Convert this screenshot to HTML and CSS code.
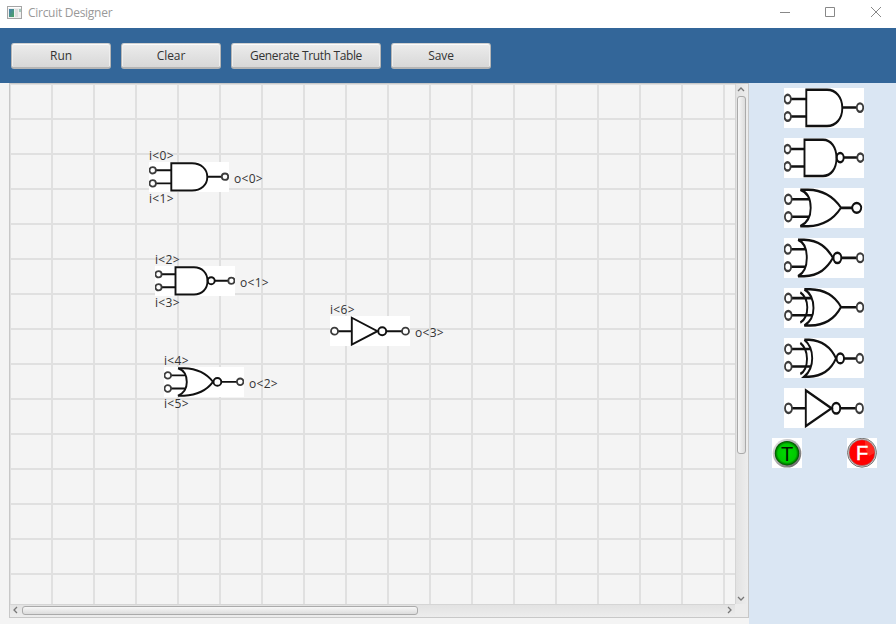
FILE: index.html
```html
<!DOCTYPE html>
<html lang="en">
<head>
<meta charset="utf-8">
<title>Circuit Designer</title>
<link rel="stylesheet" href="styles.css">
</head>
<body>
<svg class="defs" width="0" height="0" aria-hidden="true">
  <symbol id="and" viewBox="0 0 80 30" preserveAspectRatio="none">
    <path d="M22.3 1.3H43C52 1.3 58.300 7 58.300 15S52 28.500 43 28.500H22.300ZM7 8.300H22M7 21.400H22M58.300 14.700H73"/>
    <g class="pin"><circle cx="3.700" cy="8.300" r="3.200"/><circle cx="3.700" cy="21.400" r="3.200"/><circle cx="76" cy="14.700" r="3.200"/></g>
  </symbol>
  <symbol id="nand" viewBox="0 0 80 30" preserveAspectRatio="none">
    <path d="M20.500 1.300H39C47 1.300 52.500 7 52.500 15S47 28.500 39 28.500H20.500ZM6.500 8.300H20M6.500 21.300H20M60 14.700H73"/>
    <circle cx="56.200" cy="14.700" r="3.500"/>
    <g class="pin"><circle cx="3.500" cy="8.300" r="3.100"/><circle cx="3.500" cy="21.300" r="3.100"/><circle cx="76.400" cy="14.700" r="3.100"/></g>
  </symbol>
  <symbol id="or" viewBox="0 0 80 30" preserveAspectRatio="none">
    <path d="M16.300 1.300H24C40 1.500 50 7 57 14.800C50 23 40 28.300 24 28.700H16.300Q26.700 25 26.700 15Q26.700 4 16.300 1.300M8 8.500H25M8 21.600H25M57 14.900H68"/>
    <ellipse cx="72.700" cy="14.900" rx="4.500" ry="3.700"/>
    <g class="pin"><circle cx="4.300" cy="8.500" r="3.400"/><circle cx="4.300" cy="21.600" r="3.400"/></g>
  </symbol>
  <symbol id="nor" viewBox="0 0 80 30" preserveAspectRatio="none">
    <path d="M14 1.300H20C35 1.800 43 7 49 14.900C43 23 35 28 20 28.700H14Q22.800 25 22.800 15Q22.800 4 14 1.300M7 8.400H21.500M7 21.500H21.500M58 14.900H73"/>
    <circle cx="53.400" cy="14.900" r="3.900"/>
    <g class="pin"><circle cx="3.800" cy="8.400" r="3.300"/><circle cx="3.800" cy="21.500" r="3.300"/><circle cx="76.200" cy="14.800" r="3.300"/></g>
  </symbol>
  <symbol id="xor" viewBox="0 0 80 30" preserveAspectRatio="none">
    <path d="M20.300 1H26C42 1.300 51 6 57 14.300C51 23 42 28 26 28.200H20.300Q29.500 24 29.500 15Q29.500 5 20.300 1M16.300 3.200Q23.300 7 23.300 14.500Q23.300 23 16.300 26M8 7.600H28M8 20.500H28M57 14.400H72"/>
    <g class="pin"><circle cx="4.300" cy="7.600" r="3.300"/><circle cx="4.300" cy="20.500" r="3.300"/><circle cx="76" cy="14.400" r="3.300"/></g>
  </symbol>
  <symbol id="xnor" viewBox="0 0 80 30" preserveAspectRatio="none">
    <path d="M20.300 1.300H25C39 2 47 7 52 15.300C47 24 39 28.600 25 29H20.300Q28.200 24 28.200 15.200Q28.200 6 20.300 1.300M16.300 3.700Q23 8 23 15.500Q23 24 16.300 27M8 8.300H27M8 21.300H27M60 15.400H72"/>
    <circle cx="56.300" cy="15.300" r="3.700"/>
    <g class="pin"><circle cx="4.300" cy="8.300" r="3.300"/><circle cx="4.300" cy="21.300" r="3.300"/><circle cx="75.800" cy="15.300" r="3.300"/></g>
  </symbol>
  <symbol id="not" viewBox="0 0 80 30" preserveAspectRatio="none">
    <path d="M21.800 1.700V28.600L47.500 15.200ZM8 15.200H21.500M56 15.200H72"/>
    <circle cx="52.200" cy="15.200" r="4"/>
    <g class="pin"><circle cx="4.500" cy="15.200" r="3.500"/><circle cx="75.500" cy="15.200" r="3.500"/></g>
  </symbol>
</svg>

<header class="titlebar">
  <svg class="app-icon" width="15" height="13" viewBox="0 0 15 13">
    <defs><linearGradient id="app" x2="1" y2="1"><stop stop-color="#477fb3"/><stop offset="1" stop-color="#4aa35f"/></linearGradient></defs>
    <rect x=".5" y=".5" width="14" height="12" fill="#f0f0f0" stroke="#a5a5a5"/>
    <path fill="url(#app)" d="M2 3h5v8H2z"/><path fill="#ddd" d="M8 3h3v8H8z"/><path fill="#a4c8bd" d="M12 3h2v3h-2z"/><path fill="#fff" d="M1 1h13v1H1z"/>
  </svg>
  <span class="title">Circuit Designer</span>
  <svg class="controls" width="116" height="24" viewBox="0 0 116 24" fill="none" stroke="#888">
    <path d="M0 12.500h10M45.500 7.500h9v9h-9zM91 7l10 10M101 7l-10 10"/>
  </svg>
</header>

<nav class="toolbar">
  <button>Run</button>
  <button>Clear</button>
  <button class="wide">Generate Truth Table</button>
  <button>Save</button>
</nav>

<main class="workspace">
  <section class="scroll-pane">
    <div class="canvas">
      <div class="node n-and"><span class="in">i&lt;0&gt;</span><svg class="gate"><use href="#and"/></svg><span class="in b">i&lt;1&gt;</span><span class="out">o&lt;0&gt;</span></div>
      <div class="node n-nand"><span class="in">i&lt;2&gt;</span><svg class="gate"><use href="#nand"/></svg><span class="in b">i&lt;3&gt;</span><span class="out">o&lt;1&gt;</span></div>
      <div class="node n-nor"><span class="in">i&lt;4&gt;</span><svg class="gate"><use href="#nor"/></svg><span class="in b">i&lt;5&gt;</span><span class="out">o&lt;2&gt;</span></div>
      <div class="node n-not"><span class="in">i&lt;6&gt;</span><svg class="gate"><use href="#not"/></svg><span class="out">o&lt;3&gt;</span></div>
    </div>
    <div class="vbar">
      <svg class="arrow" width="8" height="5"><path d="M1 4L4 1l3 3"/></svg>
      <div class="track"><div class="thumb"></div></div>
      <svg class="arrow" width="8" height="5"><path d="M1 1l3 3 3-3"/></svg>
    </div>
    <div class="hbar">
      <svg class="arrow" width="5" height="8"><path d="M4 1L1 4l3 3"/></svg>
      <div class="track"><div class="thumb"></div></div>
      <svg class="arrow" width="5" height="8"><path d="M1 1l3 3-3 3"/></svg>
    </div>
    <div class="corner"></div>
  </section>

  <aside class="palette">
    <svg class="gate"><use href="#and"/></svg>
    <svg class="gate"><use href="#nand"/></svg>
    <svg class="gate"><use href="#or"/></svg>
    <svg class="gate"><use href="#nor"/></svg>
    <svg class="gate"><use href="#xor"/></svg>
    <svg class="gate"><use href="#xnor"/></svg>
    <svg class="gate"><use href="#not"/></svg>
    <div class="constants">
      <svg width="30" height="30" viewBox="0 0 30 30">
        <defs>
          <linearGradient id="rim" x2="1" y2="1"><stop stop-color="#eee"/><stop offset=".5" stop-color="#aaa"/><stop offset="1" stop-color="#555"/></linearGradient>
          <radialGradient id="green"><stop stop-color="#00dc00"/><stop offset=".75" stop-color="#00c800"/><stop offset="1" stop-color="#004a00"/></radialGradient>
        </defs>
        <path fill="#fff" d="M0 0h30v30H0z"/><circle cx="15" cy="15.300" r="14.300" fill="url(#rim)"/><circle cx="15" cy="15.200" r="12.200" fill="url(#green)"/>
        <text class="t" x="15" y="22.500">T</text>
      </svg>
      <svg width="30" height="30" viewBox="0 0 30 30">
        <path fill="#fff" d="M0 0h30v30H0z"/><circle cx="15" cy="14.700" r="14.500" fill="#d0d0d0" stroke="#777"/><circle cx="15" cy="14.700" r="13" fill="#f00" stroke="#888" stroke-width=".6"/>
        <path fill="#ff4a3c" d="M18 2.500C24 4 27.500 9 27.500 15L22 18L18 10Z" opacity=".55"/>
        <text class="f" x="15" y="21.500">F</text>
      </svg>
    </div>
  </aside>
</main>
</body>
</html>
```

FILE: styles.css
```css
* { box-sizing: border-box; }
body {
  margin: 0;
  width: 896px;
  height: 624px;
  overflow: hidden;
  display: flex;
  flex-direction: column;
  background: #f4f4f4;
  font: 12px/16px "Open Sans", "Noto Sans", sans-serif;
  color: #333;
}
.defs { position: absolute; }

.titlebar {
  height: 28px;
  display: flex;
  align-items: flex-start;
  padding: 5px 0 0 7px;
  background: #fff;
  color: #999;
}
.app-icon { margin: 1px 6px 0 0; }
.title { letter-spacing: -.28px; }
.controls { margin: -5px 0 0 auto; }

.toolbar {
  height: 55px;
  display: flex;
  align-items: center;
  gap: 10px;
  padding: 1px 11px 0;
  background: #336699;
}
.toolbar button {
  width: 100px;
  height: 26px;
  padding: 0;
  border: 1px solid #b5b5b5;
  border-top-color: #d0d0d0;
  border-bottom-width: 2px;
  border-radius: 3px;
  background: linear-gradient(#ececec, #d8d8d8);
  box-shadow: inset 0 1px #fbfbfb, inset 1px 0 #eee, inset -1px 0 #eee;
  font: inherit;
  letter-spacing: -.1px;
  color: #333;
}
.toolbar .wide { width: 150px; letter-spacing: -.37px; }

.workspace {
  height: 541px;
  display: flex;
  padding-left: 9px;
}
.scroll-pane {
  width: 740px;
  height: 535px;
  display: grid;
  grid-template: 520px 13px / 725px 13px;
  border: 1px solid #c8c8c8;
}
.canvas {
  position: relative;
  background:
    linear-gradient(90deg, #e0e0e0 2px, transparent 2px) -1px -1px / 42px 35px,
    linear-gradient(#e0e0e0 2px, transparent 2px) -1px -1px / 42px 35px,
    #f4f4f4;
}
.gate {
  width: 80px;
  height: 30px;
  display: block;
  background: #fff;
  fill: none;
  stroke: #111;
  stroke-width: 1.9;
}
.pin { stroke: #3c3c3c; stroke-width: 1.8; }

.node { position: absolute; width: 80px; }
.n-and { left: 139px; top: 78px; }
.n-nand { left: 145px; top: 182px; }
.n-nor { left: 154px; top: 283px; }
.n-not { left: 320px; top: 232px; }
.node span { position: absolute; letter-spacing: .3px; }
.node .in { left: 0; top: -14px; }
.node .in.b { top: 29px; }
.node .out { left: 85px; top: 9px; }

.vbar, .hbar { display: flex; align-items: center; }
.vbar {
  flex-direction: column;
  padding: 3px 2px 3px 0;
  gap: 4px;
  border-left: 1px solid #d5d5d5;
  background: linear-gradient(90deg, #e2e2e2, #ededed);
}
.hbar {
  padding: 0 3px 2px;
  gap: 4px;
  border-top: 1px solid #d5d5d5;
  background: linear-gradient(#e2e2e2, #ededed);
}
.corner { background: #ececec; }
.arrow { flex: none; fill: none; stroke: #777; stroke-width: 1.3; }
.track { flex: 1; }
.thumb { border: 1px solid #aaa; border-radius: 3px; }
.vbar .thumb {
  width: 9px;
  height: 358px;
  background: linear-gradient(90deg, #f7f7f7, #dcdcdc);
}
.hbar .thumb {
  width: 396px;
  height: 9px;
  background: linear-gradient(#f7f7f7, #dcdcdc);
}

.palette {
  width: 147px;
  display: flex;
  flex-direction: column;
  gap: 10px;
  padding: 5px 19px 0 23px;
  background: #dae6f3;
}
.palette .gate { height: 40px; margin-left: 12px; flex: none; }
.constants { display: flex; justify-content: space-between; }
.constants text { text-anchor: middle; font: 20px "Liberation Sans", sans-serif; }
.constants .t { fill: #001800; }
.constants .f { fill: #fff; stroke: #fff; stroke-width: .5; }
```
